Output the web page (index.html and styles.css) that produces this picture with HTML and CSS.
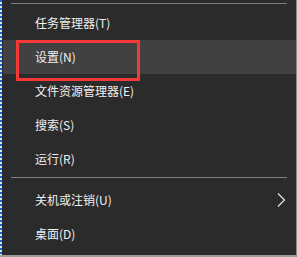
FILE: index.html
```html
<!DOCTYPE html>
<html lang="zh-CN">
<head>
<meta charset="utf-8">
<link rel="stylesheet" href="styles.css">
</head>
<body>
<div class="menu">
  <div class="edge"></div>
  <div class="content">
    <div class="sep sep-top"></div>
    <div class="item">任务管理器(T)</div>
    <div class="item active">设置(N)</div>
    <div class="item">文件资源管理器(E)</div>
    <div class="item">搜索(S)</div>
    <div class="item">运行(R)</div>
    <div class="sep sep-mid"></div>
    <div class="item has-sub">关机或注销(U)
      <svg class="chev" width="9" height="14" viewBox="0 0 9 14"><path d="M1 0.5 L7.5 7 L1 13.5" fill="none" stroke="#e6e6e6" stroke-width="1.2"/></svg>
    </div>
    <div class="item">桌面(D)</div>
  </div>
  <div class="mark"></div>
</div>
</body>
</html>
```
FILE: styles.css
```css
html, body {
  margin: 0;
  padding: 0;
  background: #2b2b2b;
}
.menu {
  position: relative;
  display: flex;
  width: 297px;
  height: 257px;
  box-sizing: border-box;
  border-right: 1px solid #8a8a8a;
  border-bottom: 2px solid #9a9a9a;
  background: #2b2b2b;
  font-family: "Noto Sans CJK SC", "Noto Sans", sans-serif;
  font-size: 12px;
  color: #f0f0f0;
}
.edge {
  width: 2px;
  flex: none;
  background: repeating-linear-gradient(to bottom, #1565d8 0 2px, #d8e4f4 2px 4px);
}
.content {
  flex: 1;
  display: flex;
  flex-direction: column;
  padding-top: 3px;
}
.sep {
  height: 1px;
  background: #7f7f7f;
  margin: 0 9px 0 9px;
}
.sep-top { margin-bottom: 2px; }
.sep-mid { margin-top: 1px; margin-bottom: 5px; }
.item {
  height: 34px;
  display: flex;
  align-items: center;
  margin-left: 1px;
  padding-left: 32px;
  line-height: 1;
  position: relative;
}
.item.active {
  background: #414141;
}
.has-sub {
  justify-content: space-between;
  padding-right: 10px;
}
.chev {
  display: block;
}
.mark {
  position: absolute;
  left: 16px;
  top: 40px;
  width: 124px;
  height: 41px;
  box-sizing: border-box;
  border: 3px solid #f53838;
}
```
